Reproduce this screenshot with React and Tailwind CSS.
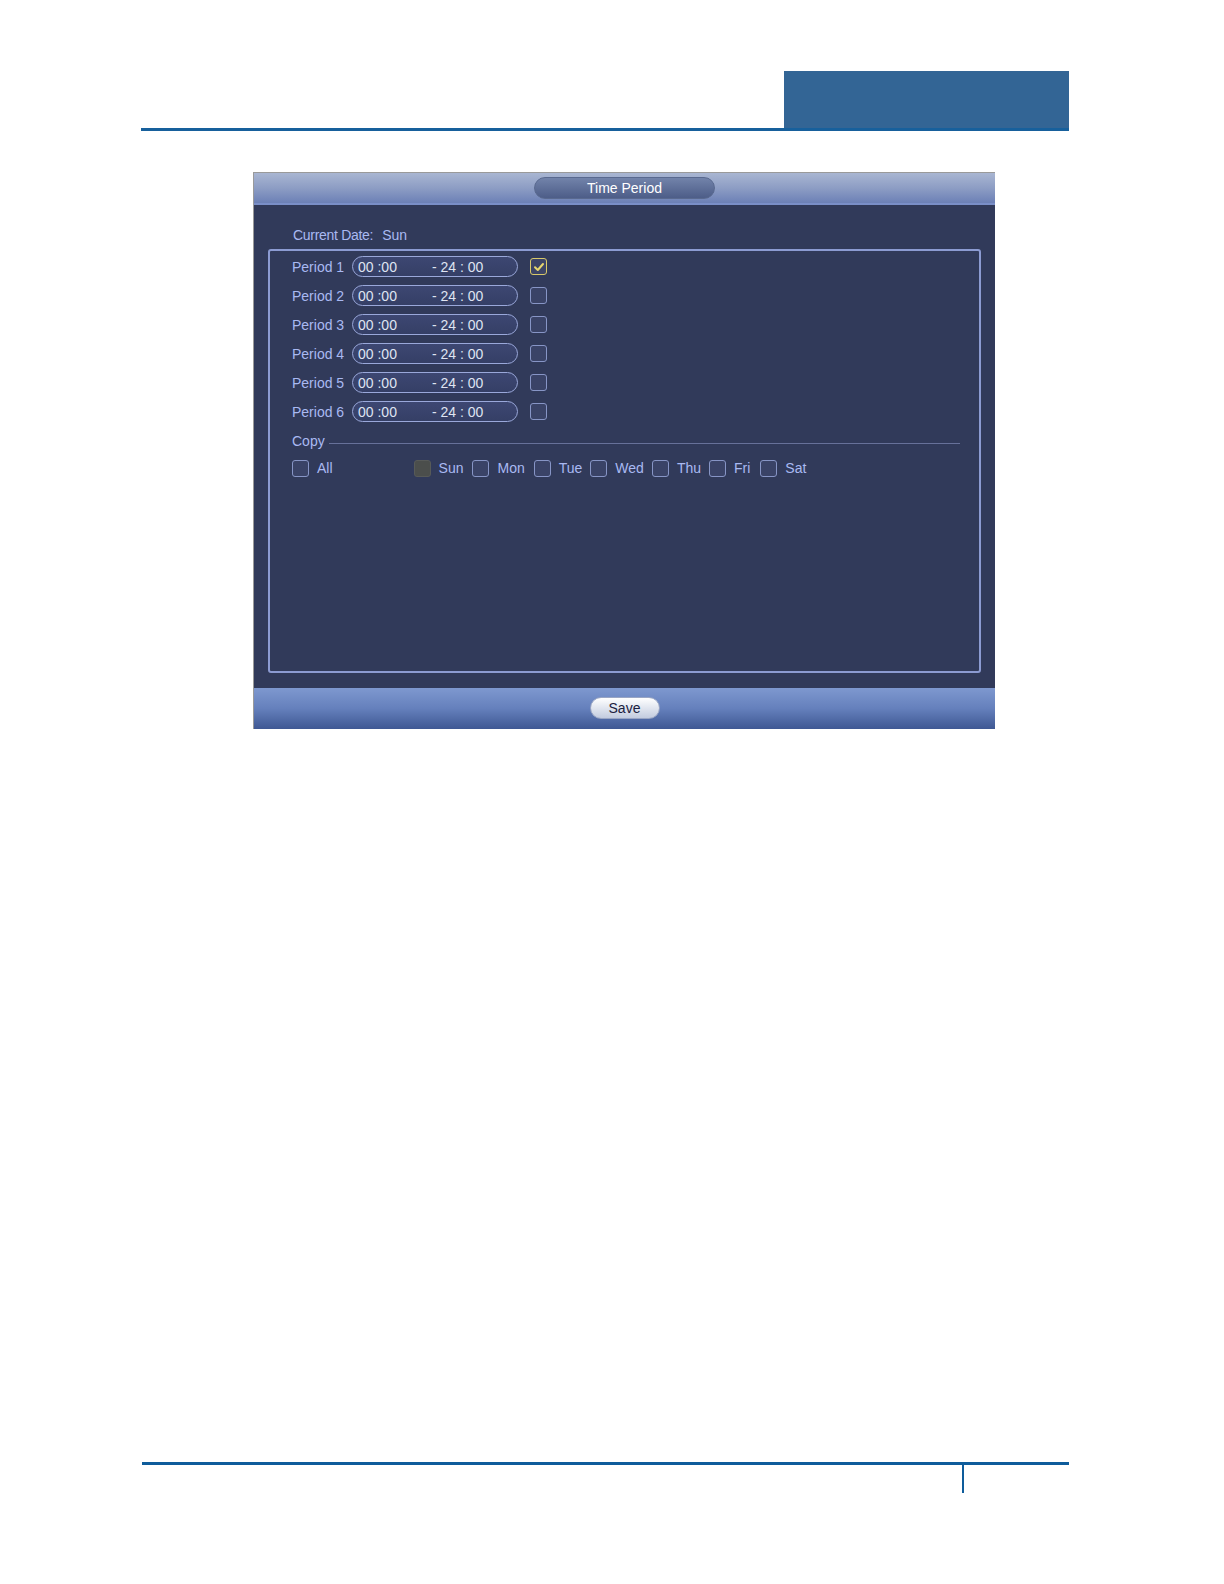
import React from "react";

const font = { fontFamily: '"Liberation Sans", Arial, sans-serif' };

function Box({ checked, disabled }) {
  if (disabled) {
    return <div className="w-[17px] h-[17px] rounded-[3px] bg-[#4b4e4c] border border-[#575a58] shrink-0" />;
  }
  if (checked) {
    return (
      <div className="w-[17px] h-[17px] rounded-[3px] border-[1.5px] border-[#d9c96a] bg-[#3c4466] shrink-0 flex items-center justify-center">
        <svg width="12" height="12" viewBox="0 0 12 12">
          <path d="M2 6.2 L4.8 9 L10 3" fill="none" stroke="#e6d66e" strokeWidth="2" strokeLinecap="round" strokeLinejoin="round" />
        </svg>
      </div>
    );
  }
  return <div className="w-[17px] h-[17px] rounded-[3px] border-[1.5px] border-[#8795c6] bg-[#3a4367] shrink-0" />;
}

function PeriodRow({ n, checked }) {
  return (
    <div className="h-[29px] flex items-center pl-[22px]">
      <div className="w-[60px] text-[14px] text-[#a9b9f2] leading-none">Period {n}</div>
      <div className="w-[166px] h-[21px] rounded-full border-[1.5px] border-[#9aa8da] bg-gradient-to-b from-[#3d4772] to-[#353f66] flex items-center text-[14px] text-[#dfe4f2] leading-none">
        <span className="pl-[5px] w-[79px]">00 :00</span>
        <span>- 24 : 00</span>
      </div>
      <div className="ml-[12px]">
        <Box checked={checked} />
      </div>
    </div>
  );
}

function Day({ label, disabled, ml }) {
  return (
    <div className={`flex items-center ${ml}`}>
      <Box disabled={disabled} />
      <span className="ml-[8px] text-[14px] text-[#a9b9f2] leading-none">{label}</span>
    </div>
  );
}

export default function App() {
  return (
    <div className="bg-white pb-[80px]" style={font}>
      <div className="ml-[141px] w-[928px] pt-[71px]">
        <div className="flex">
          <div className="flex-1" />
          <div className="w-[285px] h-[57px] bg-[#336595]" />
        </div>
        <div className="h-[3px] bg-[#17609c]" />
      </div>

      <div className="ml-[253px] mt-[41px] w-[742px] h-[557px] flex flex-col border-l border-t border-[#9a9a9a]">
        <div className="h-[32px] bg-gradient-to-b from-[#a9b6d2] via-[#8d9dc4] to-[#6c80b6] border-b-2 border-[#7a8fc8] flex justify-center pt-[4px]">
          <div className="w-[181px] h-[22px] rounded-full bg-gradient-to-b from-[#7283aa] to-[#4d5d88] border border-[#59698f] flex items-center justify-center text-[14px] text-white leading-none">
            Time Period
          </div>
        </div>

        <div className="flex-1 bg-[#313a5a] px-[14px] pt-[20px]">
          <div className="h-[20px] flex items-center pl-[25px] text-[14px] text-[#a9b9f2] leading-none">
            <span className="tracking-[-0.3px]">Current Date:</span>
            <span className="ml-[9px]">Sun</span>
          </div>
          <div className="mt-[4px] h-[424px] rounded-[3px] border-2 border-[#8c9bd2] pt-[1px]">
            <PeriodRow n={1} checked />
            <PeriodRow n={2} />
            <PeriodRow n={3} />
            <PeriodRow n={4} />
            <PeriodRow n={5} />
            <PeriodRow n={6} />
            <div className="h-[29px] flex items-center pl-[22px] pr-[19px]">
              <span className="text-[14px] text-[#a9b9f2] leading-none">Copy</span>
              <div className="flex-1 h-px bg-[#67719a] ml-[4px] mt-[6px]" />
            </div>
            <div className="h-[26px] flex items-center pl-[22px]">
              <Day label="All" ml="" />
              <Day label="Sun" disabled ml="ml-[81px]" />
              <Day label="Mon" ml="ml-[9px]" />
              <Day label="Tue" ml="ml-[9px]" />
              <Day label="Wed" ml="ml-[8px]" />
              <Day label="Thu" ml="ml-[8px]" />
              <Day label="Fri" ml="ml-[8px]" />
              <Day label="Sat" ml="ml-[10px]" />
            </div>
          </div>
        </div>

        <div className="h-[41px] bg-gradient-to-b from-[#7e98cf] via-[#6580bc] to-[#3f5893] flex justify-center pt-[9px]">
          <div className="w-[70px] h-[22px] rounded-full bg-gradient-to-b from-[#ffffff] to-[#c3ccdf] border border-[#9aa6c4] flex items-center justify-center text-[14px] text-[#1b2140] leading-none">
            Save
          </div>
        </div>
      </div>

      <div className="ml-[142px] mt-[733px] w-[927px]">
        <div className="h-[3px] bg-[#0e5c9b]" />
        <div className="ml-[820px] w-[2px] h-[28px] bg-[#0e5c9b]" />
      </div>
    </div>
  );
}
